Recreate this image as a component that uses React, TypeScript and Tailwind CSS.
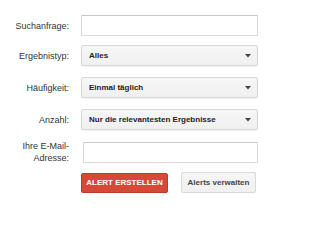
import React from "react";

const font = { fontFamily: '"Liberation Sans", Arial, sans-serif' };

function Arrow() {
  return (
    <svg width="6" height="4" viewBox="0 0 6 4" className="block">
      <path d="M0 0 H6 L3 3.5 Z" fill="#444" />
    </svg>
  );
}

function Select({ text }: { text: string }) {
  return (
    <div className="flex h-[21px] w-[177px] items-center justify-between rounded-[2px] border border-[#d6d6d6] bg-gradient-to-b from-[#f6f6f6] to-[#f0f0f0] pl-[7px] pr-[6px] shadow-[0_1px_1px_rgba(0,0,0,0.05)]">
      <span className="text-[8px] font-bold leading-none text-[#222]">{text}</span>
      <Arrow />
    </div>
  );
}

function Input({ w = "w-[177px]" }: { w?: string }) {
  return (
    <div
      className={`h-[21px] ${w} rounded-[1px] border border-[#d9d9d9] border-t-[#c8c8c8] bg-white`}
    />
  );
}

function Label({ children }: { children: React.ReactNode }) {
  return (
    <div className="w-[69px] shrink-0 text-right text-[9px] leading-[12px] text-[#333]">
      {children}
    </div>
  );
}

export default function App() {
  return (
    <div className="h-[217px] w-[300px] bg-white" style={font}>
      <div className="flex flex-col pt-[15px]">
        <div className="flex items-center gap-[12px]">
          <Label>Suchanfrage:</Label>
          <Input />
        </div>
        <div className="mt-[9px] flex items-center gap-[12px]">
          <Label>Ergebnistyp:</Label>
          <Select text="Alles" />
        </div>
        <div className="mt-[11px] flex items-center gap-[12px]">
          <Label>Häufigkeit:</Label>
          <Select text="Einmal täglich" />
        </div>
        <div className="mt-[11px] flex items-center gap-[12px]">
          <Label>Anzahl:</Label>
          <Select text="Nur die relevantesten Ergebnisse" />
        </div>
        <div className="mt-[10px] flex items-center gap-[14px]">
          <Label>
            Ihre E-Mail-
            <br />
            Adresse:
          </Label>
          <Input w="w-[175px]" />
        </div>
        <div className="ml-[81px] mt-[8px] flex items-center gap-[13px]">
          <div className="flex h-[20px] w-[87px] items-center justify-center rounded-[2px] border border-[#b93b2a] bg-[#d54a37] text-[8px] font-bold leading-none text-white">
            ALERT ERSTELLEN
          </div>
          <div className="flex h-[21px] w-[75px] items-center justify-center rounded-[2px] border border-[#d9d9d9] bg-gradient-to-b from-[#f6f6f6] to-[#f0f0f0] text-[8px] font-bold leading-none text-[#444]">
            Alerts verwalten
          </div>
        </div>
      </div>
    </div>
  );
}
